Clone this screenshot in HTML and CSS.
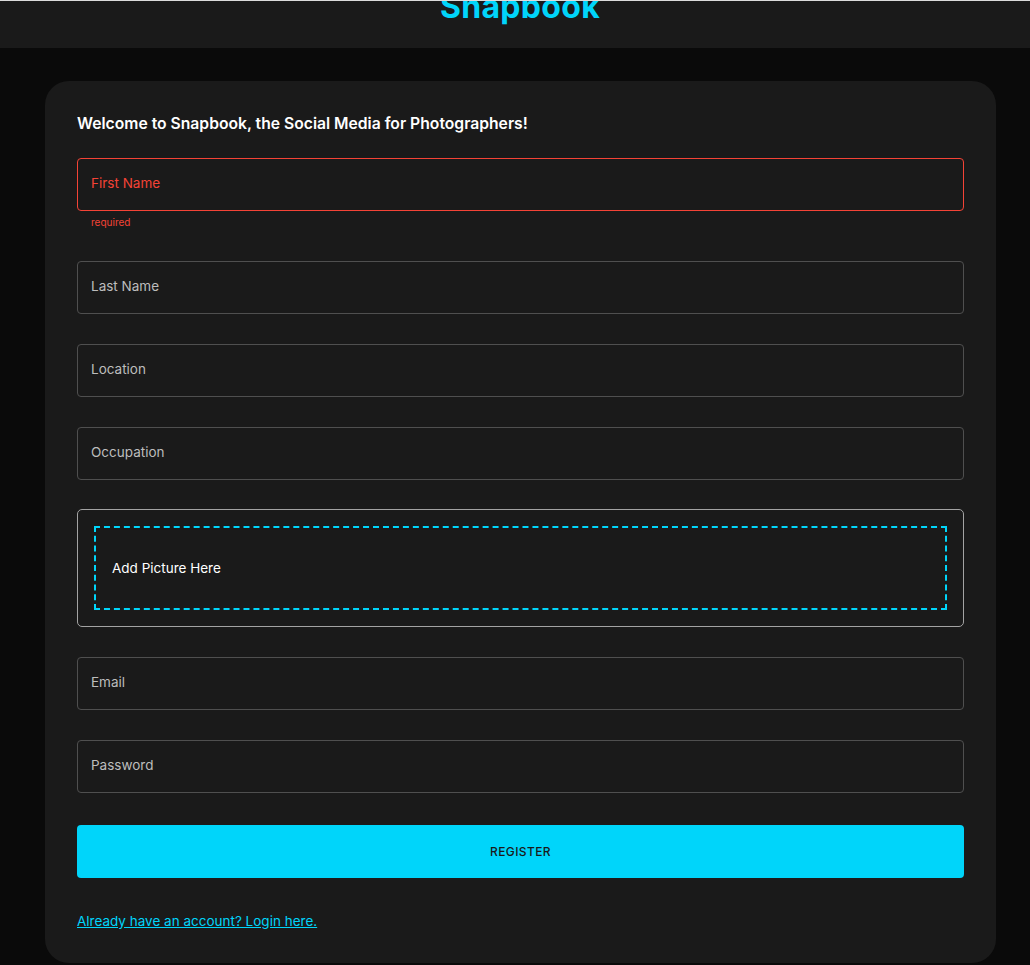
FILE: index.html
```html
<!DOCTYPE html>
<html lang="en">
<head>
<meta charset="utf-8">
<title>Snapbook</title>
<link rel="stylesheet" href="styles.css">
</head>
<body>
<header class="navbar">
  <h1 class="brand">Snapbook</h1>
</header>
<main class="card">
  <h2 class="welcome">Welcome to Snapbook, the Social Media for Photographers!</h2>
  <form class="form">
    <div class="field-wrap">
      <div class="field field-error"><span class="field-label">First Name</span></div>
      <p class="helper">required</p>
    </div>
    <div class="field"><span class="field-label">Last Name</span></div>
    <div class="field"><span class="field-label">Location</span></div>
    <div class="field"><span class="field-label">Occupation</span></div>
    <div class="drop-outer">
      <div class="drop-inner"><span class="drop-text">Add Picture Here</span></div>
    </div>
    <div class="field"><span class="field-label">Email</span></div>
    <div class="field"><span class="field-label">Password</span></div>
    <button type="button" class="register">REGISTER</button>
  </form>
  <a class="switch" href="#">Already have an account? Login here.</a>
</main>
</body>
</html>
```

FILE: styles.css
```css
* { box-sizing: border-box; }
html, body { margin: 0; padding: 0; }
body {
  background: #0a0a0a;
  font-family: "Inter", "Noto Sans", "Liberation Sans", sans-serif;
  color: #e0e0e0;
  height: 965px;
  overflow: hidden;
  border-top: 1px solid #dcdcdc;
}
.navbar {
  height: 47px;
  background: #1a1a1a;
  display: flex;
  justify-content: center;
  overflow: hidden;
  padding-left: 10px;
}
.brand {
  margin: -14px 0 0 0;
  font-size: 32px;
  line-height: 40px;
  font-weight: 700;
  color: #00d5fa;
  letter-spacing: 0.3px;
}
.card {
  width: 951px;
  margin: 33px 0 0 45px;
  background: #1a1a1a;
  border-radius: 24px;
  padding: 32px 32px 32px;
}
.welcome {
  margin: 0 0 23px 0;
  font-size: 15.7px;
  line-height: 22px;
  font-weight: 600;
  color: #ffffff;
}
.form {
  display: flex;
  flex-direction: column;
  gap: 30px;
}
.field {
  height: 53px;
  border: 1px solid #4f4f4f;
  border-radius: 4px;
  display: flex;
  align-items: center;
  padding: 0 13px 3px;
}
.field-label {
  font-size: 13.5px;
  color: #bdbdbd;
}
.field-error { border-color: #f44336; }
.field-error .field-label { color: #f44336; }
.helper {
  margin: 3px 14px 0;
  font-size: 10px;
  line-height: 17px;
  color: #f44336;
}
.drop-outer {
  margin-top: -1px;
  border: 1px solid #a3a3a3;
  border-radius: 5px;
  padding: 16px;
}
.drop-inner {
  height: 84px;
  border: 2px dashed #00d5fa;
  display: flex;
  align-items: center;
  padding: 0 16px;
}
.drop-text {
  font-size: 13.5px;
  color: #ffffff;
}
.register {
  margin-top: 2px;
  height: 53px;
  border: none;
  border-radius: 4px;
  background: #00d5fa;
  color: #1a1a1a;
  font-family: inherit;
  font-size: 12px;
  letter-spacing: 0.4px;
  font-weight: 500;
}
.switch {
  display: inline-block;
  margin-top: 33px;
  font-size: 13.5px;
  line-height: 20px;
  color: #00d5fa;
  text-decoration: underline;
}
```
